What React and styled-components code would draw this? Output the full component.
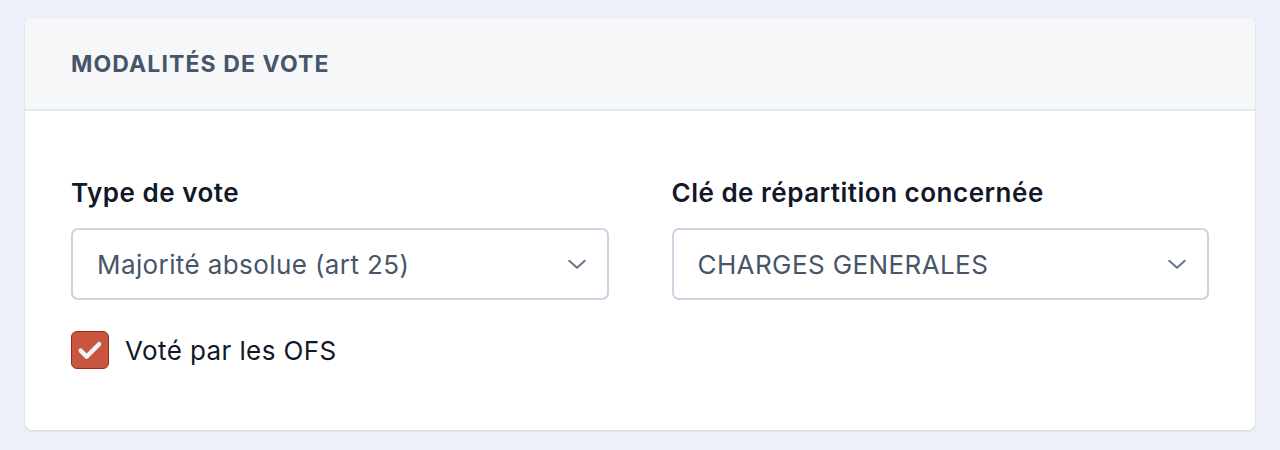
import styled, { createGlobalStyle } from 'styled-components';

const GlobalStyle = createGlobalStyle`
  html, body {
    margin: 0;
    padding: 0;
    background: #edf0f8;
    font-family: Inter, "Noto Sans", sans-serif;
  }
`;

const Page = styled.div`
  padding: 18px 25px 19px 25px;
`;

const Card = styled.section`
  background: #ffffff;
  border-radius: 7px;
  box-shadow: 0 1px 3px rgba(30, 41, 80, 0.08), 0 1px 2px rgba(30, 41, 80, 0.05);
  overflow: hidden;
`;

const CardHeader = styled.div`
  background: #f6f7f9;
  border-bottom: 2px solid #e3e7ee;
  height: 91px;
  display: flex;
  align-items: center;
  padding: 0 46px;
`;

const Title = styled.h2`
  margin: 0;
  font-size: 23px;
  font-weight: 700;
  letter-spacing: 1.1px;
  color: #475569;
  text-transform: uppercase;
`;

const CardBody = styled.div`
  padding: 67px 46px 61px 46px;
  display: flex;
  flex-direction: column;
  gap: 31px;
`;

const Grid = styled.div`
  display: grid;
  grid-template-columns: 1fr 1fr;
  gap: 63px;
`;

const Field = styled.div`
  display: flex;
  flex-direction: column;
  gap: 20px;
`;

const Label = styled.label`
  font-size: 26px;
  line-height: 30px;
  font-weight: 600;
  letter-spacing: 0.5px;
  color: #111827;
`;

const SelectBox = styled.div`
  height: 72px;
  box-sizing: border-box;
  border: 2px solid #cbd5e1;
  border-radius: 7px;
  background: #fff;
  display: flex;
  align-items: center;
  justify-content: space-between;
  padding: 0 19px 0 24px;
  font-size: 26px;
  letter-spacing: 0.4px;
  color: #475569;
`;

const Chevron = () => (
  <svg width="22" height="22" viewBox="0 0 24 24" fill="none">
    <path d="M3.5 8.5l8.5 7.5 8.5-7.5" stroke="#64748b" strokeWidth="2.1" strokeLinecap="round" strokeLinejoin="round" />
  </svg>
);

const CheckRow = styled.label`
  display: flex;
  align-items: center;
  gap: 16px;
  font-size: 26px;
  letter-spacing: 0.4px;
  color: #111827;
`;

const CheckBox = styled.span`
  width: 38px;
  height: 38px;
  box-sizing: border-box;
  border-radius: 6px;
  background: ${(p) => (p.checked ? '#c8553d' : '#fff')};
  border: 1.5px solid ${(p) => (p.checked ? '#9a2a1a' : '#cbd5e1')};
  display: flex;
  align-items: center;
  justify-content: center;
`;

const Select = ({ value }) => (
  <SelectBox>
    <span>{value}</span>
    <Chevron />
  </SelectBox>
);

export default function App() {
  return (
    <>
      <GlobalStyle />
      <Page>
        <Card>
          <CardHeader>
            <Title>Modalités de vote</Title>
          </CardHeader>
          <CardBody>
            <Grid>
              <Field>
                <Label>Type de vote</Label>
                <Select value="Majorité absolue (art 25)" />
              </Field>
              <Field>
                <Label>Clé de répartition concernée</Label>
                <Select value="CHARGES GENERALES" />
              </Field>
            </Grid>
            <CheckRow>
              <CheckBox checked>
                <svg width="30" height="30" viewBox="0 0 24 24" fill="none">
                  <path d="M4.5 12.5l4.8 4.8 10-10" stroke="#f4f5fb" strokeWidth="3.4" strokeLinecap="round" strokeLinejoin="round" />
                </svg>
              </CheckBox>
              Voté par les OFS
            </CheckRow>
          </CardBody>
        </Card>
      </Page>
    </>
  );
}
